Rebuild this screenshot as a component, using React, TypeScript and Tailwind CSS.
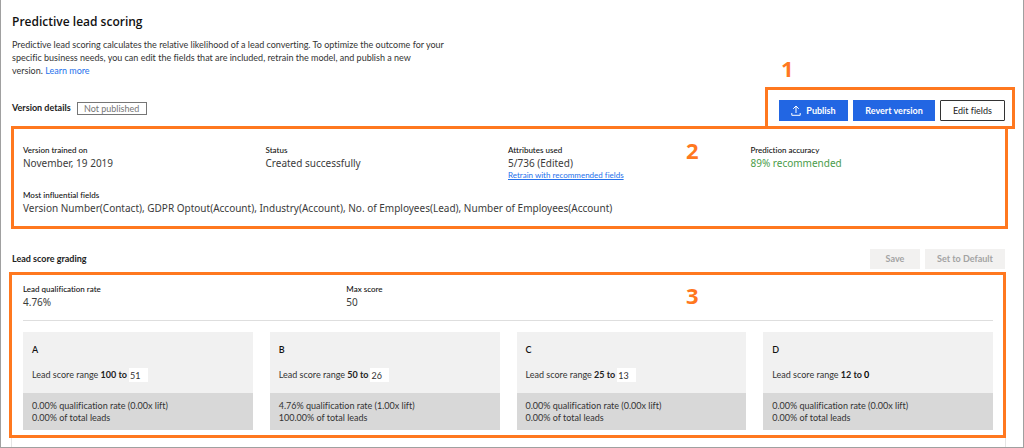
import React from "react";

type Grade = {
  name: string;
  from: number;
  to: number;
  editable: boolean;
  rate: string;
  share: string;
};

const grades: Grade[] = [
  { name: "A", from: 100, to: 51, editable: true, rate: "0.00% qualification rate (0.00x lift)", share: "0.00% of total leads" },
  { name: "B", from: 50, to: 26, editable: true, rate: "4.76% qualification rate (1.00x lift)", share: "100.00% of total leads" },
  { name: "C", from: 25, to: 13, editable: true, rate: "0.00% qualification rate (0.00x lift)", share: "0.00% of total leads" },
  { name: "D", from: 12, to: 0, editable: false, rate: "0.00% qualification rate (0.00x lift)", share: "0.00% of total leads" },
];

function Stat({ label, children }: { label: string; children: React.ReactNode }) {
  return (
    <div>
      <dt className="text-[8px] font-medium leading-3 text-[#111]">{label}</dt>
      <dd className="font-['Noto_Sans','Open_Sans',sans-serif] text-[10px] leading-[14px] text-[#3b3b3b]">{children}</dd>
    </div>
  );
}

function UploadIcon() {
  return (
    <svg width="10" height="11" viewBox="0 0 10 11" fill="none" stroke="currentColor" strokeWidth="1" aria-hidden="true">
      <path d="M5 8V1.2M2.2 3.8 5 1l2.8 2.8M0.8 8v2.3h8.4V8" />
    </svg>
  );
}

function GradeCard({ grade }: { grade: Grade }) {
  const id = `grade-${grade.name}`;
  return (
    <article className="bg-[#f1f1f1]">
      <div className="h-[61px] px-[9px] pt-[11px] text-[9px] text-[#333]">
        <h3 className="font-semibold leading-[14px] text-[#111]">{grade.name}</h3>
        <div className="mt-[11px] flex h-[14px] items-center gap-[2px]">
          <label htmlFor={id} className="whitespace-nowrap">
            Lead score range <span className="font-bold text-[#222]">{grade.from} to</span>
          </label>
          {grade.editable ? (
            <input id={id} defaultValue={grade.to} className="h-[14px] w-[19px] bg-white pl-px text-[9px] text-[#333] outline-none" />
          ) : (
            <output id={id} className="font-bold text-black">{grade.to}</output>
          )}
        </div>
      </div>
      <div className="h-[37px] bg-[#d8d8d8] px-[9px] pt-[7px] text-[9px] leading-3 text-[#333]">
        <p>{grade.rate}</p>
        <p>{grade.share}</p>
      </div>
    </article>
  );
}

export default function App() {
  return (
    <main className="flex min-h-screen flex-col border-x border-b border-[#a0a0a0] bg-white font-['Lato','Open_Sans',sans-serif] text-[#333] [font-variant-ligatures:none]">
      <header className="px-[11px] pt-3">
        <h1 className="font-['Open_Sans','Noto_Sans',sans-serif] text-[12px] font-semibold leading-5 text-[#111]">Predictive lead scoring</h1>
        <p className="mt-[6px] text-[9px] leading-[13px]">
          Predictive lead scoring calculates the relative likelihood of a lead converting. To optimize the outcome for your
          <br />
          specific business needs, you can edit the fields that are included, retrain the model, and publish a new
          <br />
          version. <a href="#learn" className="text-[#2672ec]">Learn more</a>
        </p>
      </header>

      <section>
        <div className="mt-[10px] flex items-center pl-[11px] pr-2">
          <h2 className="text-[9px] font-bold text-[#222]">Version details</h2>
          <span className="ml-[6px] flex h-[13px] w-[70px] items-center justify-center border border-[#767676] text-[9px] leading-none text-[#767676]">
            Not published
          </span>
          <div className="relative z-10 ml-auto flex gap-[5px] border-3 border-[#ff781f] pb-[5px] pl-[11px] pr-[7px] pt-[10px]">
            <span className="absolute -top-[34px] left-[13px] font-['Open_Sans','Noto_Sans',sans-serif] text-[22px] font-bold leading-6 text-[#ff781f]">1</span>
            <button className="flex h-[21px] w-[69px] items-center justify-center gap-[5px] bg-[#2266e3] text-[9px] font-bold text-white">
              <UploadIcon />
              Publish
            </button>
            <button className="h-[21px] w-[82px] bg-[#2266e3] text-[9px] font-bold text-white">Revert version</button>
            <button className="h-[21px] w-[65px] rounded-[1px] border border-[#333] bg-white text-[9px] text-[#222]">Edit fields</button>
          </div>
        </div>
        <div className="relative -mt-[3px] ml-[10px] mr-[15px] border-3 border-[#ff781f] pb-[11px] pl-[9px] pr-3 pt-[15px]">
          <span className="absolute left-[68%] top-[9px] -ml-[2px] font-['Open_Sans','Noto_Sans',sans-serif] text-[22px] font-bold leading-6 text-[#ff781f]">2</span>
          <dl className="grid grid-cols-4">
            <Stat label="Version trained on">November, 19 2019</Stat>
            <Stat label="Status">Created successfully</Stat>
            <Stat label="Attributes used">
              5/736 (Edited)
              <a href="#retrain" className="block font-['Lato','Open_Sans',sans-serif] text-[8px] leading-[11px] text-[#2672ec] underline">
                Retrain with recommended fields
              </a>
            </Stat>
            <Stat label="Prediction accuracy">
              <span className="text-[#4a9c4a]">89% recommended</span>
            </Stat>
          </dl>
          <dl className="mt-2">
            <Stat label="Most influential fields">
              Version Number(Contact), GDPR Optout(Account), Industry(Account), No. of Employees(Lead), Number of Employees(Account)
            </Stat>
          </dl>
        </div>
      </section>

      <section className="flex grow flex-col">
        <div className="mt-5 flex items-center gap-[5px] pl-[11px] pr-[18px]">
          <h2 className="mr-auto text-[9px] font-bold text-[#222]">Lead score grading</h2>
          <button disabled className="h-5 w-[50px] bg-[#f2f1f0] text-[9px] font-bold text-[#a3a3a3]">Save</button>
          <button disabled className="h-5 w-20 bg-[#f2f1f0] text-[9px] font-bold text-[#a3a3a3]">Set to Default</button>
        </div>
        <div className="relative ml-2 mr-[17px] mt-[3px] border-3 border-[#ff781f] pb-[5px] pl-[11px] pr-[10px] pt-2">
          <span className="absolute left-[68%] top-2 font-['Open_Sans','Noto_Sans',sans-serif] text-[22px] font-bold leading-6 text-[#ff781f]">3</span>
          <dl className="grid grid-cols-3 border-b border-[#dedede] pb-[11px]">
            <Stat label="Lead qualification rate">4.76%</Stat>
            <Stat label="Max score">50</Stat>
          </dl>
          <div className="mt-[11px] grid grid-cols-4 gap-[17px]">
            {grades.map((grade) => (
              <GradeCard key={grade.name} grade={grade} />
            ))}
          </div>
        </div>
        <div className="ml-[10px] mr-[17px] min-h-2 grow border-x border-[#e5e5e5]" />
      </section>
    </main>
  );
}
